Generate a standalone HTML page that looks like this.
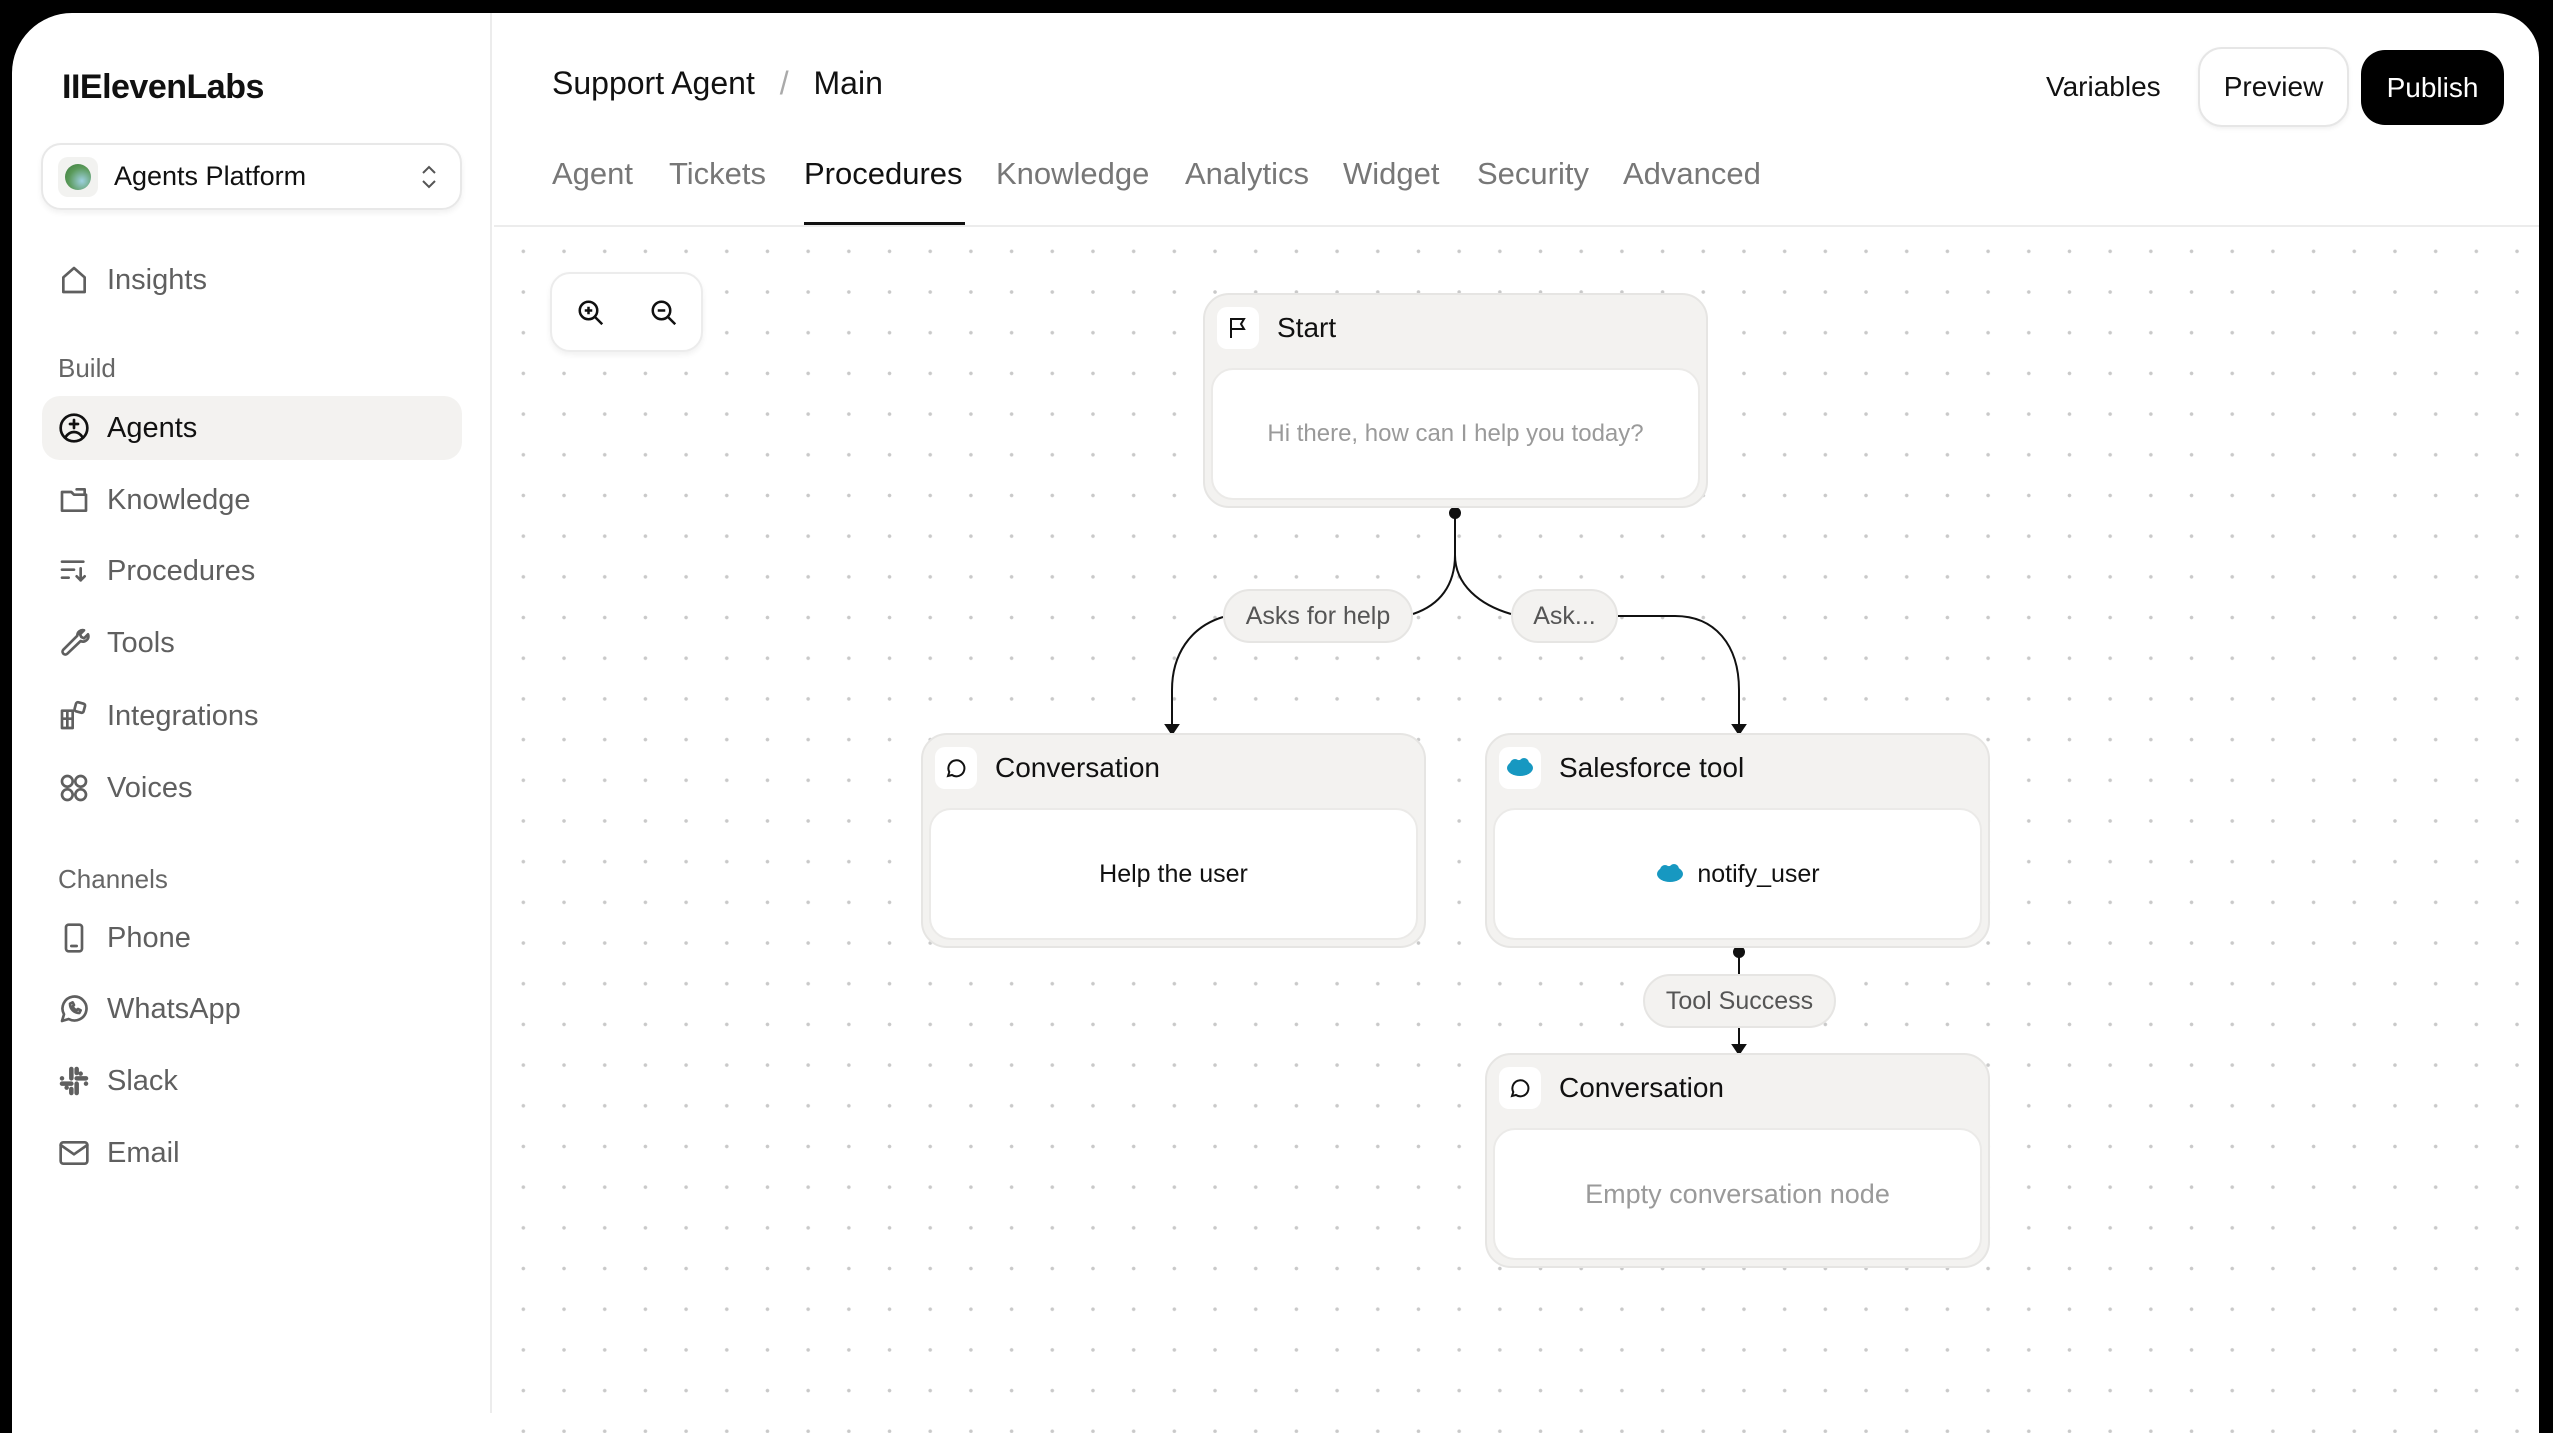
<!DOCTYPE html>
<html><head><meta charset="utf-8"><style>
*{margin:0;padding:0;box-sizing:border-box}
html,body{width:2553px;height:1392px;overflow:hidden;background:#000;font-family:"Liberation Sans",sans-serif;color:#111}
#frame{position:absolute;left:12px;top:13px;width:2527px;height:1420px;background:#fff;border-radius:60px 44px 0 0;overflow:hidden}
.abs{position:absolute}
#side{position:absolute;left:0;top:0;width:480px;height:1400px;border-right:2px solid #ececec}
.nav{position:absolute;left:30px;width:420px;height:64px;display:flex;align-items:center;font-size:29px;color:#5f5f5f}
.nav svg{width:32px;height:32px;margin-left:16px;margin-right:17px;fill:none;stroke:#5f5f5f;stroke-width:2;stroke-linecap:round;stroke-linejoin:round}
.lab{position:absolute;left:46px;font-size:26px;color:#666}
#canvas{position:absolute;left:482px;top:214px;right:0;bottom:0;background-image:radial-gradient(circle,#c9c9c9 1.6px,transparent 2px);background-size:40.7px 40.7px;background-position:9px 4px}
.tab{position:absolute;top:143px;font-size:31px;color:#777}
.node{position:absolute;width:505px;height:215px;background:#f3f2f0;border:2px solid #e6e5e3;border-radius:26px}
.node .hd{position:absolute;left:12px;top:11px;height:44px;display:flex;align-items:center;font-size:28px;color:#111}
.node .ic{width:42px;height:42px;background:#fff;border-radius:10px;display:flex;align-items:center;justify-content:center;margin-right:18px}
.node .in{position:absolute;left:6px;right:6px;top:73px;bottom:6px;background:#fff;border:2px solid #ebeae8;border-radius:22px;display:flex;align-items:center;justify-content:center;font-size:25px}
.pill{position:absolute;height:54px;background:#f3f2f0;border:2px solid #e6e5e3;border-radius:27px;display:flex;align-items:center;justify-content:center;font-size:25px;color:#555}
</style></head><body>
<div id="frame">
<div id="side">
 <div class="abs" style="left:50px;top:55px;font-size:34px;font-weight:bold;letter-spacing:-0.5px">IIElevenLabs</div>
 <div class="abs" style="left:29px;top:130px;width:421px;height:67px;border:2px solid #e8e8e8;border-radius:20px;box-shadow:0 3px 6px rgba(0,0,0,0.06);display:flex;align-items:center">
  <div style="width:40px;height:40px;border-radius:10px;background:#f2f2f0;margin-left:15px;display:flex;align-items:center;justify-content:center"><div style="width:26px;height:26px;border-radius:50%;background:radial-gradient(circle at 65% 65%,#9ed0e0,#5a9a5a 55%,#3c7a3c)"></div></div>
  <span style="font-size:27px;margin-left:16px">Agents Platform</span>
  <svg style="position:absolute;right:22px" width="18" height="26" viewBox="0 0 18 26" fill="none" stroke="#555" stroke-width="2"><path d="M3 9l6-6 6 6M3 17l6 6 6-6"/></svg>
 </div>
 <div class="nav" style="top:235px"><svg viewBox="0 0 24 24"><path d="M4 10l8-7 8 7v11H4z"/></svg>Insights</div>
 <div class="lab" style="top:340px">Build</div>
 <div class="nav" style="top:383px;background:#f3f2f0;border-radius:18px;color:#111"><svg viewBox="0 0 24 24" style="stroke:#111"><circle cx="12" cy="12" r="10"/><path d="M5.5 19c2-3 4-4 6.5-4s4.5 1 6.5 4M12 6v6M9 9h6"/></svg>Agents</div>
 <div class="nav" style="top:455px"><svg viewBox="0 0 24 24"><path d="M3 6h7l2 2h9v12H3zM14 4h6v4"/></svg>Knowledge</div>
 <div class="nav" style="top:526px"><svg viewBox="0 0 24 24"><path d="M3 5h16M3 11h9M3 17h5M17 10v9M14 16l3 3 3-3"/></svg>Procedures</div>
 <div class="nav" style="top:598px"><svg viewBox="0 0 24 24"><path d="M14.5 6.5a4 4 0 0 1 5-4l-3 3 1 2 2 1 3-3a4 4 0 0 1-5.5 5L7 20a2 2 0 0 1-3-3l9-9z"/></svg>Tools</div>
 <div class="nav" style="top:671px"><svg viewBox="0 0 24 24"><path d="M3 8h8v13H3zM3 14h8M7 8v13M7 14h4"/><rect x="13" y="2" width="7" height="7" rx="1.5" transform="rotate(15 16 5)"/></svg>Integrations</div>
 <div class="nav" style="top:743px"><svg viewBox="0 0 24 24"><circle cx="7" cy="7" r="4"/><circle cx="17" cy="7" r="4"/><circle cx="7" cy="17" r="4"/><circle cx="17" cy="17" r="4"/></svg>Voices</div>
 <div class="lab" style="top:851px">Channels</div>
 <div class="nav" style="top:893px"><svg viewBox="0 0 24 24"><rect x="6" y="2" width="12" height="20" rx="2"/><path d="M10 18h4"/></svg>Phone</div>
 <div class="nav" style="top:964px"><svg viewBox="0 0 24 24"><path d="M3 21l1.5-5A9 9 0 1 1 8 19.5z"/><path d="M9 8c0 4 3 7 7 7l1-2-2-1-1 1c-1.5-.5-2.5-1.5-3-3l1-1-1-2z"/></svg>WhatsApp</div>
 <div class="nav" style="top:1036px"><svg viewBox="0 0 24 24" style="stroke-width:3.4"><path d="M10 3v7M14 14v7M3 14h7M14 10h7M17 6.5v0M6.5 17v0M10 21v0M3 10v0M21 14v0M14 3v3M10 18v3"/></svg>Slack</div>
 <div class="nav" style="top:1108px"><svg viewBox="0 0 24 24"><rect x="2" y="4" width="20" height="16" rx="2"/><path d="M2 6l10 7 10-7"/></svg>Email</div>
</div>

<div class="abs" style="left:540px;top:52px;font-size:32px">Support Agent <span style="color:#aaa;margin:0 16px">/</span> Main</div>
<div class="tab" style="left:540px">Agent</div>
<div class="tab" style="left:657px">Tickets</div>
<div class="tab" style="left:792px;color:#111">Procedures</div>
<div class="abs" style="left:792px;top:209px;width:161px;height:4px;background:#111"></div>
<div class="tab" style="left:984px">Knowledge</div>
<div class="tab" style="left:1173px">Analytics</div>
<div class="tab" style="left:1331px">Widget</div>
<div class="tab" style="left:1465px">Security</div>
<div class="tab" style="left:1611px">Advanced</div>
<div class="abs" style="left:482px;top:212px;right:0;height:2px;background:#ececec"></div>
<div class="abs" style="left:2034px;top:58px;font-size:28px">Variables</div>
<div class="abs" style="left:2186px;top:34px;width:151px;height:80px;border:2px solid #e6e6e6;border-radius:24px;box-shadow:0 2px 5px rgba(0,0,0,0.06);display:flex;align-items:center;justify-content:center;font-size:28px">Preview</div>
<div class="abs" style="left:2349px;top:37px;width:143px;height:75px;background:#000;border-radius:24px;display:flex;align-items:center;justify-content:center;font-size:28px;color:#fff">Publish</div>

<div id="canvas"></div>
<div class="abs" style="left:538px;top:259px;width:153px;height:80px;background:#fff;border:2px solid #ececec;border-radius:20px;box-shadow:0 3px 6px rgba(0,0,0,0.06)">
 <svg class="abs" style="left:24px;top:24px" width="30" height="30" viewBox="0 0 24 24" fill="none" stroke="#111" stroke-width="2"><circle cx="10" cy="10" r="7"/><path d="M15 15l6 6M10 7v6M7 10h6"/></svg>
 <svg class="abs" style="left:97px;top:24px" width="30" height="30" viewBox="0 0 24 24" fill="none" stroke="#111" stroke-width="2"><circle cx="10" cy="10" r="7"/><path d="M15 15l6 6M7 10h6"/></svg>
</div>

<svg class="abs" style="left:-12px;top:-13px" width="2553" height="1392" fill="none" stroke="#111" stroke-width="2">
 <path d="M1455 513V555C1455 585 1440 605 1413 614"/>
 <path d="M1455 555C1455 585 1480 605 1511 614"/>
 <path d="M1223 617C1190 627 1172 655 1172 690V728"/>
 <path d="M1618 616H1675C1715 616 1739 645 1739 690V728"/>
 <path d="M1739 952V974M1739 1027V1048"/>
 <circle cx="1455" cy="513" r="5" fill="#111"/>
 <circle cx="1739" cy="952" r="5" fill="#111"/>
 <path d="M1166 725l6 9 6-9z M1733 725l6 9 6-9z M1733 1045l6 9 6-9z" fill="#111"/>
</svg>

<div class="node" style="left:1191px;top:280px"><div class="hd"><div class="ic"><svg width="24" height="24" viewBox="0 0 24 24" fill="none" stroke="#111" stroke-width="2"><path d="M5 22V3h13l-3 5 3 5H5"/></svg></div>Start</div><div class="in" style="color:#9a9a9a;font-size:24px">Hi there, how can I help you today?</div></div>
<div class="pill" style="left:1211px;top:576px;width:190px">Asks for help</div>
<div class="pill" style="left:1499px;top:576px;width:107px">Ask...</div>
<div class="node" style="left:909px;top:720px"><div class="hd"><div class="ic"><svg width="24" height="24" viewBox="0 0 24 24" fill="none" stroke="#111" stroke-width="2"><path d="M4 20l1.3-4A8 8 0 1 1 8 19z"/></svg></div>Conversation</div><div class="in">Help the user</div></div>
<div class="node" style="left:1473px;top:720px"><div class="hd"><div class="ic"><svg width="30" height="22" viewBox="0 0 30 22"><ellipse cx="15" cy="11" rx="13" ry="8" fill="#1798c1"/><circle cx="10" cy="7" r="5" fill="#1798c1"/><circle cx="19" cy="6" r="5" fill="#1798c1"/></svg></div>Salesforce tool</div><div class="in"><svg width="30" height="22" viewBox="0 0 30 22" style="margin-right:12px"><ellipse cx="15" cy="11" rx="13" ry="8" fill="#1798c1"/><circle cx="10" cy="7" r="5" fill="#1798c1"/><circle cx="19" cy="6" r="5" fill="#1798c1"/></svg>notify_user</div></div>
<div class="pill" style="left:1631px;top:961px;width:193px">Tool Success</div>
<div class="node" style="left:1473px;top:1040px"><div class="hd"><div class="ic"><svg width="24" height="24" viewBox="0 0 24 24" fill="none" stroke="#111" stroke-width="2"><path d="M4 20l1.3-4A8 8 0 1 1 8 19z"/></svg></div>Conversation</div><div class="in" style="color:#9a9a9a;font-size:27px">Empty conversation node</div></div>
</div>
</body></html>
